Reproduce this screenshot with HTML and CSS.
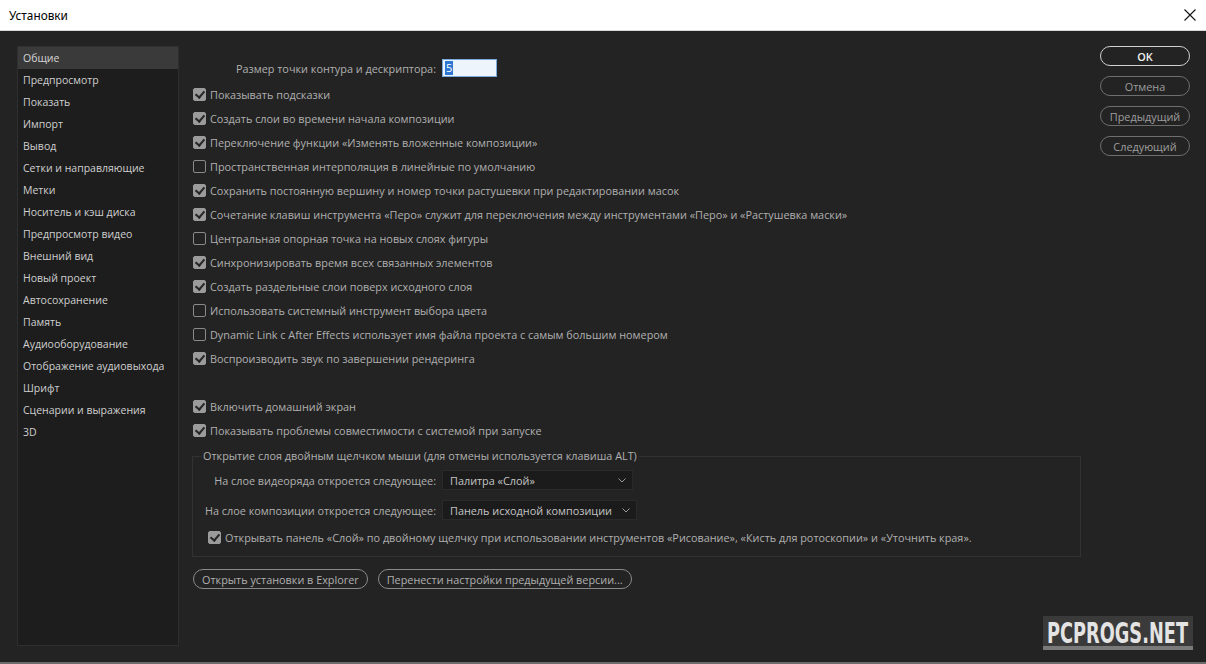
FILE: index.html
```html
<!DOCTYPE html>
<html lang="ru">
<head>
<meta charset="utf-8">
<title>Установки</title>
<link rel="stylesheet" href="styles.css">
</head>
<body>
<div class="window">
  <header class="titlebar">
    <span class="title">Установки</span>
    <svg class="close" width="12" height="12" viewBox="0 0 12 12"><path d="M0.5 0.5 L11.5 11.5 M11.5 0.5 L0.5 11.5" stroke="#111" stroke-width="1.1" fill="none"/></svg>
  </header>
  <div class="body">
    <nav class="sidebar">
      <div class="nav-item active">Общие</div>
      <div class="nav-item">Предпросмотр</div>
      <div class="nav-item">Показать</div>
      <div class="nav-item">Импорт</div>
      <div class="nav-item">Вывод</div>
      <div class="nav-item">Сетки и направляющие</div>
      <div class="nav-item">Метки</div>
      <div class="nav-item">Носитель и кэш диска</div>
      <div class="nav-item">Предпросмотр видео</div>
      <div class="nav-item">Внешний вид</div>
      <div class="nav-item">Новый проект</div>
      <div class="nav-item">Автосохранение</div>
      <div class="nav-item">Память</div>
      <div class="nav-item">Аудиооборудование</div>
      <div class="nav-item">Отображение аудиовыхода</div>
      <div class="nav-item">Шрифт</div>
      <div class="nav-item">Сценарии и выражения</div>
      <div class="nav-item">3D</div>
    </nav>
    <main class="content">
      <div class="field-row top-field">
        <span class="field-label">Размер точки контура и дескриптора:</span>
        <span class="text-input"><span class="sel">5</span></span>
      </div>
      <label class="check-row"><span class="cb on"></span>Показывать подсказки</label>
      <label class="check-row"><span class="cb on"></span>Создать слои во времени начала композиции</label>
      <label class="check-row"><span class="cb on"></span>Переключение функции «Изменять вложенные композиции»</label>
      <label class="check-row"><span class="cb"></span>Пространственная интерполяция в линейные по умолчанию</label>
      <label class="check-row"><span class="cb on"></span>Сохранить постоянную вершину и номер точки растушевки при редактировании масок</label>
      <label class="check-row"><span class="cb on"></span>Сочетание клавиш инструмента «Перо» служит для переключения между инструментами «Перо» и «Растушевка маски»</label>
      <label class="check-row"><span class="cb"></span>Центральная опорная точка на новых слоях фигуры</label>
      <label class="check-row"><span class="cb on"></span>Синхронизировать время всех связанных элементов</label>
      <label class="check-row"><span class="cb on"></span>Создать раздельные слои поверх исходного слоя</label>
      <label class="check-row"><span class="cb"></span>Использовать системный инструмент выбора цвета</label>
      <label class="check-row"><span class="cb"></span>Dynamic Link с After Effects использует имя файла проекта с самым большим номером</label>
      <label class="check-row"><span class="cb on"></span>Воспроизводить звук по завершении рендеринга</label>
      <div class="spacer"></div>
      <label class="check-row"><span class="cb on"></span>Включить домашний экран</label>
      <label class="check-row"><span class="cb on"></span>Показывать проблемы совместимости с системой при запуске</label>
      <fieldset class="group">
        <legend>Открытие слоя двойным щелчком мыши (для отмены используется клавиша ALT)</legend>
        <div class="field-row">
          <span class="field-label">На слое видеоряда откроется следующее:</span>
          <span class="select w1">Палитра «Слой»<svg class="chev" width="8" height="5" viewBox="0 0 8 5"><path d="M0.5 0.5 L4 4 L7.5 0.5" stroke="#9a9a9a" fill="none"/></svg></span>
        </div>
        <div class="field-row">
          <span class="field-label">На слое композиции откроется следующее:</span>
          <span class="select w2">Панель исходной композиции<svg class="chev" width="8" height="5" viewBox="0 0 8 5"><path d="M0.5 0.5 L4 4 L7.5 0.5" stroke="#9a9a9a" fill="none"/></svg></span>
        </div>
        <label class="check-row inner"><span class="cb on"></span>Открывать панель «Слой» по двойному щелчку при использовании инструментов «Рисование», «Кисть для ротоскопии» и «Уточнить края».</label>
      </fieldset>
      <div class="bottom-buttons">
        <button class="pill">Открыть установки в Explorer</button>
        <button class="pill">Перенести настройки предыдущей версии...</button>
      </div>
    </main>
    <aside class="actions">
      <button class="pill action primary">OK</button>
      <button class="pill action">Отмена</button>
      <button class="pill action">Предыдущий</button>
      <button class="pill action">Следующий</button>
    </aside>
  </div>
  <div class="watermark">
    <svg class="wm-svg" width="150" height="30" viewBox="0 0 150 30"><text x="4" y="16.9" transform="scale(1,1.6)" textLength="141" lengthAdjust="spacingAndGlyphs" class="wm-text">PCPROGS.NET</text></svg>
  </div>
</div>
</body>
</html>
```

FILE: styles.css
```css
* { box-sizing: border-box; }
html, body { margin: 0; padding: 0; }
body {
  width: 1206px;
  height: 664px;
  overflow: hidden;
  background: #232323;
  font-family: "Open Sans", "Noto Sans", sans-serif;
}
.window {
  position: relative;
  width: 1206px;
  height: 664px;
  overflow: hidden;
  background: #232323;
  border-bottom: 2px solid #6b6b6b;
}
.titlebar {
  height: 31px;
  background: #ffffff;
  display: flex;
  align-items: center;
  justify-content: space-between;
  padding: 0 10px 0 9px;
  border-bottom: 1px solid #d8d8d8;
}
.title {
  font-family: "Noto Sans", sans-serif;
  font-size: 11.8px;
  color: #000;
}
.body {
  display: flex;
  padding: 15px 0 0 17px;
}
.sidebar {
  width: 162px;
  height: 600px;
  background: #1d1d1d;
  border: 1px solid #2f2f2f;
  flex-shrink: 0;
}
.nav-item {
  height: 22px;
  line-height: 23px;
  padding-left: 5px;
  font-size: 10.5px;
  color: #cfcfcf;
  white-space: nowrap;
}
.nav-item.active { background: #3a3a3a; color: #d6d6d6; }
.content {
  margin-left: 14px;
  width: 906px;
  display: flex;
  flex-direction: column;
  padding-top: 9px;
}
.field-row {
  display: flex;
  align-items: center;
  height: 24px;
}
.top-field { height: 26px; margin-bottom: 1px; }
.field-label {
  width: 243px;
  text-align: right;
  font-size: 10.85px;
  color: #b0b0b0;
  margin-right: 6px;
  white-space: nowrap;
}
.text-input {
  width: 55px;
  height: 18px;
  background: #eef4fb;
  border: 1px solid #7aa9de;
  display: flex;
  align-items: center;
  padding-left: 2px;
}
.sel {
  background: #2f76d2;
  color: #fff;
  font-size: 11px;
  line-height: 14px;
  padding: 0 1px;
}
.check-row {
  display: flex;
  align-items: center;
  height: 24px;
  font-size: 10.85px;
  color: #b0b0b0;
  white-space: nowrap;
}
.cb {
  width: 13px;
  height: 13px;
  border: 1px solid #8a8a8a;
  border-radius: 2px;
  margin-right: 4px;
  flex-shrink: 0;
  position: relative;
}
.cb.on {
  background: #9b9b9b;
  border-color: #9b9b9b;
}
.cb.on::after {
  content: "";
  position: absolute;
  left: 3px;
  top: 0px;
  width: 4px;
  height: 7px;
  border-right: 2px solid #262626;
  border-bottom: 2px solid #262626;
  transform: rotate(40deg);
}
.spacer { height: 24px; }
.group {
  margin: 7px 0 0 -1px;
  width: 889px;
  border: 1px solid #323232;
  padding: 2px 0 7px 0;
  min-width: 0;
}
.group legend {
  font-size: 10.85px;
  color: #b0b0b0;
  padding: 0 2px 0 2px;
  margin-left: 8px;
  line-height: 14px;
}
.group .field-row { height: 30px; }
.select {
  height: 20px;
  background: #1b1b1b;
  border: 1px solid #2a2a2a;
  font-size: 10.85px;
  color: #c4c4c4;
  display: flex;
  align-items: center;
  justify-content: space-between;
  padding: 0 6px 0 7px;
}
.select.w1 { width: 191px; }
.select.w2 { width: 195px; }
.check-row.inner { padding-left: 15px; height: 24px; }
.bottom-buttons {
  display: flex;
  gap: 10px;
  margin-top: 12px;
}
.pill {
  height: 20px;
  border: 1px solid #8a8a8a;
  border-radius: 10px;
  background: transparent;
  color: #b0b0b0;
  font-family: "Open Sans", "Noto Sans", sans-serif;
  font-size: 10.85px;
  padding: 0 8px;
  line-height: 17px;
  white-space: nowrap;
}
.actions {
  margin-left: 1px;
  display: flex;
  flex-direction: column;
  gap: 10px;
}
.action {
  width: 90px;
  padding: 0;
  border-color: #6e6e6e;
  color: #9e9e9e;
}
.action.primary {
  border-color: #cfcfcf;
  color: #f0f0f0;
  font-weight: 600;
}
.watermark {
  position: absolute;
  left: 1043px;
  top: 616px;
  width: 150px;
  height: 34px;
  background: #3a3a3a;
  border-bottom: 4px solid #7a7a7a;
}
.wm-svg { display: block; overflow: visible; }
.wm-text {
  fill: #e4e4e4;
  font-family: "DejaVu Sans", sans-serif;
  font-weight: bold;
  font-size: 18px;
}
```
